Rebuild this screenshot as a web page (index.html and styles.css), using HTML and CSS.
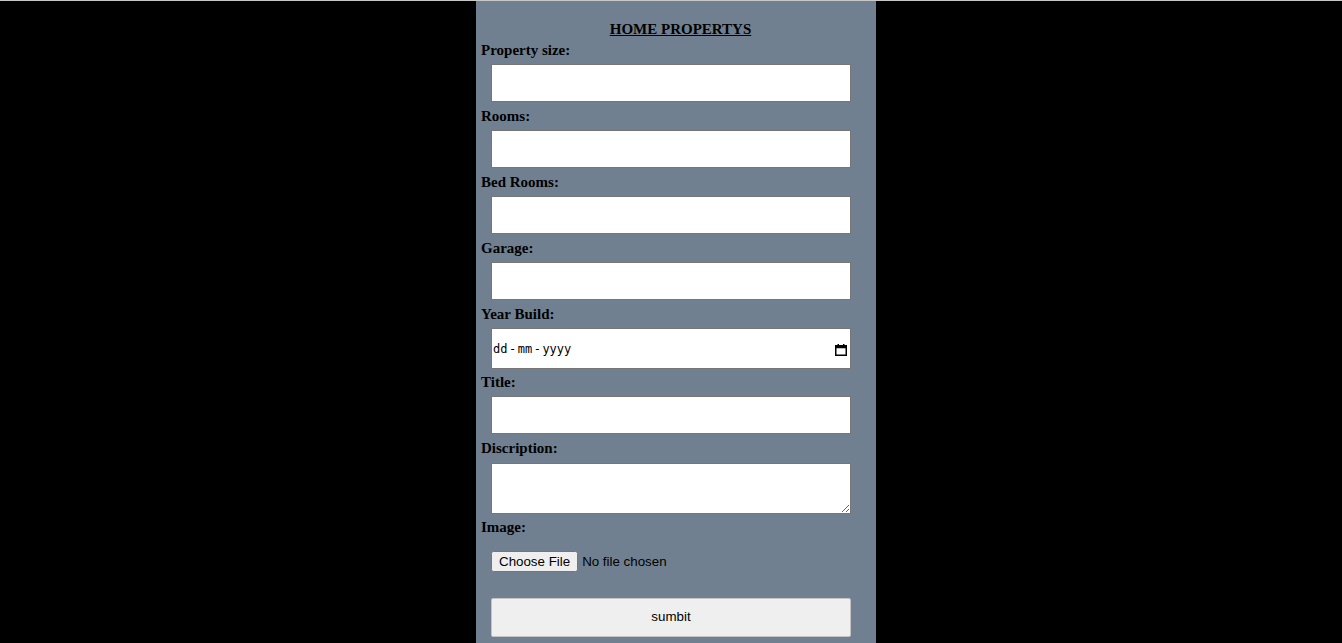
FILE: index.html
```html
<!DOCTYPE html>
<html>
<head>
<meta charset="utf-8">
<title>Home Propertys</title>
<link rel="stylesheet" href="styles.css">
</head>
<body>
<div class="panel">
  <form class="form">
    <h3 class="title">HOME PROPERTYS</h3>
    <label class="label">Property size:</label>
    <input class="field" type="text">
    <label class="label">Rooms:</label>
    <input class="field" type="text">
    <label class="label">Bed Rooms:</label>
    <input class="field" type="text">
    <label class="label">Garage:</label>
    <input class="field" type="text">
    <label class="label">Year Build:</label>
    <div class="field date">
      <span class="date-text">dd<span class="sep">-</span>mm<span class="sep">-</span>yyyy</span>
      <svg class="cal" width="12" height="13" viewBox="0 0 12 13">
        <rect x="0.75" y="2.75" width="10.5" height="9.5" fill="none" stroke="#000" stroke-width="1.5"/>
        <rect x="0.75" y="2.75" width="10.5" height="2.5" fill="#000"/>
        <rect x="2.5" y="1" width="1.5" height="2" fill="#000"/>
        <rect x="8" y="1" width="1.5" height="2" fill="#000"/>
      </svg>
    </div>
    <label class="label">Title:</label>
    <input class="field" type="text">
    <label class="label">Discription:</label>
    <textarea class="field area"></textarea>
    <label class="label">Image:</label>
    <input class="file" type="file">
    <button class="submit" type="button">sumbit</button>
  </form>
</div>
</body>
</html>
```
FILE: styles.css
```css
html, body {
  margin: 0;
  padding: 0;
  background: #000;
}
body {
  border-top: 1px solid #c8c8c8;
  padding-left: 10px;
  font-family: "Liberation Serif", "Times New Roman", serif;
}
.panel {
  width: 400px;
  margin: 0 auto;
  background: #708090;
  min-height: 660px;
}
.form {
  display: flex;
  flex-direction: column;
  align-items: flex-start;
  padding: 0 5px 10px 5px;
}
.title {
  align-self: stretch;
  text-align: center;
  text-decoration: underline;
  font-size: 15px;
  line-height: 18px;
  font-weight: bold;
  margin: 0 0 3px 0;
  padding: 19px 0 0 9px;
}
.label {
  display: block;
  font-weight: bold;
  font-size: 15px;
  line-height: 18px;
  color: #000;
}
.field {
  display: block;
  box-sizing: border-box;
  width: 360px;
  height: 38px;
  margin: 5px 0 5px 10px;
  border: 1px solid #767676;
  background: #fff;
  padding: 1px 2px;
}
.date {
  display: flex;
  align-items: center;
  justify-content: space-between;
  height: 41px;
  padding: 0 3px 0 1px;
  margin-bottom: 4px;
}
.date-text {
  font-family: "DejaVu Sans Mono", monospace;
  font-size: 12px;
  color: #000;
}
.sep {
  margin: 0 1.5px;
}
.cal {
  display: block;
  margin-top: 1px;
}
.area {
  height: 51px;
  resize: both;
  margin-top: 6px;
  margin-bottom: 4px;
}
.file {
  margin: 15px 0 26px 10px;
  font-family: "Liberation Sans", Arial, sans-serif;
  font-size: 13.33px;
  color: #000;
}
.submit {
  box-sizing: border-box;
  width: 360px;
  height: 39px;
  margin-left: 10px;
  padding-bottom: 3px;
  background: #efefef;
  border: 1px solid #c4c4c4;
  border-radius: 2px;
  font-family: "Liberation Sans", Arial, sans-serif;
  font-size: 13.33px;
  color: #000;
}
```
